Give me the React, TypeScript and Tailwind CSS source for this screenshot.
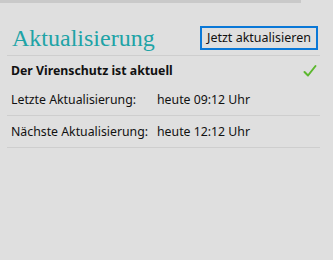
export default function App() {
  return (
    <div className="w-[333px] h-[260px] bg-[#dfdfdf] relative overflow-hidden" style={{ fontFamily: '"Noto Sans", "Open Sans", sans-serif' }}>
      {/* top strip */}
      <div className="w-[301px] h-[3px] bg-[#c9c9c9]" />

      <div className="pl-[7px] pr-[13px] pt-[22px]">
        {/* header */}
        <div className="flex items-center justify-between pl-[5px] pr-[2px] pb-[4px] border-b border-[#cecece]">
          <h1 className="text-[24px] leading-[26px] text-[#20a3a6]" style={{ fontFamily: '"Liberation Serif", "DejaVu Serif", serif' }}>
            Aktualisierung
          </h1>
          <button className="h-[24px] w-[118px] border-2 border-[#0a78d7] text-[12.5px] text-[#111] leading-none">
            Jetzt aktualisieren
          </button>
        </div>

        {/* status */}
        <div className="flex items-center justify-between pl-[4px] pt-[6px] pb-[3px]">
          <span className="text-[12.3px] font-bold text-[#111]">Der Virenschutz ist aktuell</span>
          <svg width="14" height="14" viewBox="0 0 14 14" className="mr-[3px]">
            <path d="M1.5 8 L5 11.5 L12.5 2" fill="none" stroke="#5cb82e" strokeWidth="2" strokeLinecap="round" strokeLinejoin="round" />
          </svg>
        </div>

        <div className="flex items-center pl-[4px] pt-[1px] h-[33px] border-b border-[#cecece] text-[12.3px] text-[#111]">
          <span className="w-[146px]">Letzte Aktualisierung:</span>
          <span>heute 09:12 Uhr</span>
        </div>
        <div className="flex items-center pl-[4px] h-[32px] border-b border-[#cecece] text-[12.3px] text-[#111]">
          <span className="w-[146px]">Nächste Aktualisierung:</span>
          <span>heute 12:12 Uhr</span>
        </div>
      </div>
    </div>
  );
}
